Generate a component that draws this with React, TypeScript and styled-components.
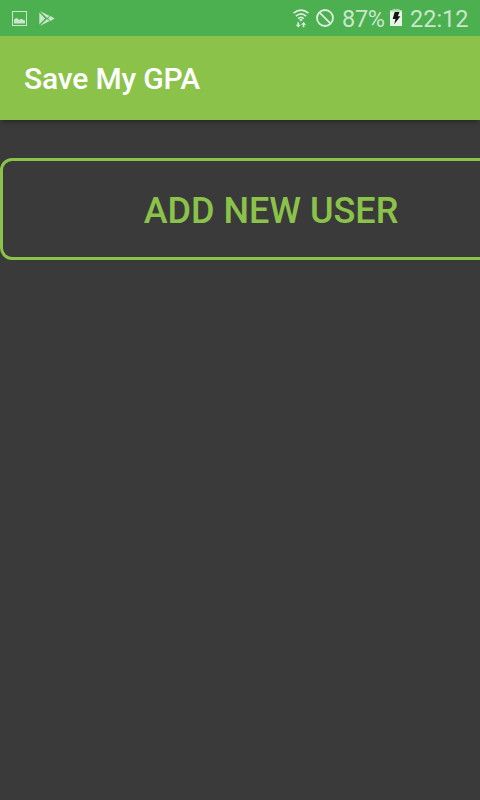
import styled, { createGlobalStyle } from 'styled-components';

const GlobalStyle = createGlobalStyle`
  body {
    margin: 0;
    background: #3a3a3a;
    font-family: Roboto, 'Liberation Sans', sans-serif;
  }
`;

const PictureIcon = () => (
  <svg width="15" height="15" viewBox="0 0 15 15">
    <rect x="0.5" y="0.5" width="14" height="14" fill="none" stroke="currentColor" strokeWidth="1" />
    <path d="M2 12.5V8.5l1.5-1 1.5-.5L7 9l2-1.2 1.5.7L13 9.5v3z" fill="currentColor" />
  </svg>
);

const PlayStoreIcon = () => (
  <svg width="16" height="15" viewBox="0 0 16 15">
    <path d="M.3 1.6v11.8L6.2 7.5z" fill="currentColor" />
    <path d="M.8 0L10.8 4.9 8 7.1zM.8 15L10.8 10.1 8 7.9zM11.6 5L15.6 7.5l-4 2.5L9 7.5z" fill="currentColor" />
  </svg>
);

const WifiIcon = () => (
  <svg width="16" height="19" viewBox="0 0 16 19">
    <g fill="none" stroke="currentColor" strokeWidth="1.7">
      <path d="M.5 4.2Q8-2.1 15.5 4.2" />
      <path d="M2.9 7.2Q8 2.7 13.1 7.2" />
      <path d="M5.2 9.7Q8 7.2 10.8 9.7" />
    </g>
    <path d="M6.2 10.7Q8 9.4 9.8 10.7L8 12.6z" fill="currentColor" />
    <path d="M4.4 13.2h1.7v2.5h1.8l-2.6 2.8-2.6-2.8h1.7zM9.7 18.3h1.7v-2.5h1.8L10.6 13 8 15.8h1.7z" fill="currentColor" />
  </svg>
);

const BlockedIcon = () => (
  <svg width="18" height="18" viewBox="0 0 18 18">
    <g fill="none" stroke="currentColor" strokeWidth="1.8">
      <circle cx="9" cy="9" r="8" />
      <path d="M3.4 3.4l11.2 11.2" />
    </g>
  </svg>
);

const BatteryIcon = () => (
  <svg width="12" height="18" viewBox="0 0 12 18">
    <path d="M2.5 0h7v1H12v3H0V1h2.5z" fill="#a6d7a8" />
    <path d="M0 2.5h12V17H0z" fill="#e8f5e9" />
    <path d="M4.7 3h4.8L7.8 7.2h2.6l-6.2 8 1.3-5.2H2.7z" fill="#101510" />
  </svg>
);

const App = () => (
  <>
    <GlobalStyle />
    <Screen>
      <StatusBar>
        <Notifications>
          <PictureIcon />
          <PlayStoreIcon />
        </Notifications>
        <Indicators>
          <WifiIcon />
          <BlockedIcon />
          <StatusText $width={41} $spacing={-0.3}>
            87%
          </StatusText>
          <BatteryIcon />
          <StatusText $width={59}>22:12</StatusText>
        </Indicators>
      </StatusBar>
      <Toolbar>
        <Title>Save My GPA</Title>
      </Toolbar>
      <Content>
        <AddUserButton>ADD NEW USER</AddUserButton>
      </Content>
    </Screen>
  </>
);

const Screen = styled.div`
  display: flex;
  flex-direction: column;
  width: 480px;
  height: 800px;
  overflow: hidden;
  background: #3a3a3a;
`;

const StatusBar = styled.div`
  display: flex;
  flex: none;
  align-items: center;
  justify-content: space-between;
  box-sizing: border-box;
  z-index: 1;
  height: 36px;
  padding: 0 11px 0 12px;
  background: #4caf50;
  color: #c9e7cb;
`;

const Notifications = styled.div`
  display: flex;
  align-items: center;
  gap: 12px;
  padding-top: 1px;
`;

const Indicators = styled.div`
  display: flex;
  align-items: center;
  gap: 7px;
  color: #dbefdc;
`;

const StatusText = styled.span<{ $width: number; $spacing?: number }>`
  width: ${(props) => props.$width}px;
  margin-left: 1px;
  padding-top: 2px;
  font-size: 23.5px;
  line-height: 34px;
  letter-spacing: ${(props) => props.$spacing ?? 0}px;
  white-space: nowrap;
  color: #c9e7cb;
`;

const Toolbar = styled.header`
  display: flex;
  flex: none;
  align-items: center;
  box-sizing: border-box;
  height: 84px;
  padding: 2px 24px 0;
  background: #8bc34a;
  box-shadow: 0 4px 5px -2px rgba(0, 0, 0, 0.3);
`;

const Title = styled.h1`
  margin: 0;
  font-size: 30px;
  font-weight: 500;
  line-height: 36px;
  letter-spacing: -0.17px;
  color: #fff;
`;

const Content = styled.main`
  display: flex;
  padding-top: 38px;
`;

/* wider than the screen, so its right edge runs off */
const AddUserButton = styled.button`
  flex: none;
  width: 542px;
  height: 102px;
  padding: 4px 0 0;
  border: 3px solid #8bc34a;
  border-radius: 12px;
  background: transparent;
  font-family: inherit;
  font-size: 36px;
  font-weight: 500;
  color: #8bc34a;
`;

export default App;
